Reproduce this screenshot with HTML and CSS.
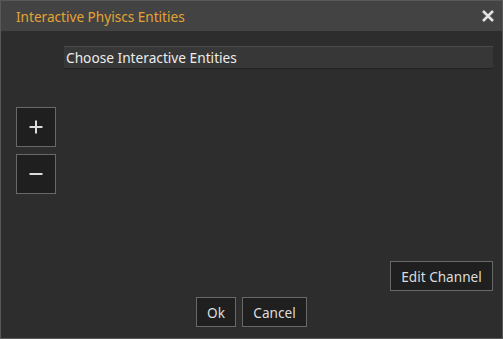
FILE: index.html
```html
<!DOCTYPE html>
<html lang="en">
<head>
    <meta charset="UTF-8">
    <title>Interactive Phyiscs Entities</title>
    <link rel="stylesheet" href="styles.css">
</head>
<body>
    <div class="window">
        <div class="titlebar">
            <span class="title">Interactive Phyiscs Entities</span>
            <button class="close" type="button">
                <svg width="14" height="14" viewBox="0 0 14 14">
                    <path d="M2 2 L12 12 M12 2 L2 12" stroke="#e2e2e2" stroke-width="2.6" fill="none"/>
                </svg>
            </button>
        </div>
        <div class="content">
            <div class="field-row">
                <div class="field">Choose Interactive Entities</div>
            </div>
            <div class="side-buttons">
                <button class="square" type="button">
                    <svg width="16" height="16" viewBox="0 0 16 16">
                        <path d="M8 1.5 V14.5 M1.5 8 H14.5" stroke="#dcdcdc" stroke-width="2" fill="none"/>
                    </svg>
                </button>
                <button class="square" type="button">
                    <svg width="16" height="16" viewBox="0 0 16 16">
                        <path d="M1.5 8 H14.5" stroke="#dcdcdc" stroke-width="2" fill="none"/>
                    </svg>
                </button>
            </div>
            <div class="edit-row">
                <button class="btn edit" type="button">Edit Channel</button>
            </div>
            <div class="footer">
                <button class="btn ok" type="button">Ok</button>
                <button class="btn cancel" type="button">Cancel</button>
            </div>
        </div>
    </div>
</body>
</html>
```

FILE: styles.css
```css
body {
    margin: 0;
    background-color: #2d2d2d;
    font-family: "Noto Sans", "Open Sans", sans-serif;
}
.window {
    width: 503px;
    height: 339px;
    box-sizing: border-box;
    border: 1px solid #585858;
    background-color: #2d2d2d;
    display: flex;
    flex-direction: column;
}
.titlebar {
    height: 30px;
    background-color: #434343;
    display: flex;
    align-items: center;
    justify-content: space-between;
    padding: 0 7px 0 15px;
}
.title {
    color: #e3a434;
    font-size: 13.6px;
}
.close {
    background: none;
    border: none;
    padding: 0;
    width: 14px;
    height: 14px;
    display: flex;
}
.content {
    flex: 1;
    display: flex;
    flex-direction: column;
    padding-bottom: 11px;
}
.field-row {
    padding: 15px 9px 0 63px;
}
.field {
    height: 23px;
    box-sizing: border-box;
    background-color: #373737;
    border-top: 1px solid #4a4a4a;
    border-bottom: 1px solid #222;
    color: #ececec;
    font-size: 13.7px;
    line-height: 21px;
    padding-left: 2px;
}
.side-buttons {
    display: flex;
    flex-direction: column;
    gap: 7px;
    margin: 38px 0 0 15px;
}
.square {
    width: 40px;
    height: 40px;
    background-color: #1f1f1f;
    border: 1px solid #686868;
    padding: 0;
    display: flex;
    align-items: center;
    justify-content: center;
}
.btn {
    height: 30px;
    background-color: #1f1f1f;
    border: 1px solid #686868;
    color: #dcdcdc;
    font-family: "Noto Sans", "Open Sans", sans-serif;
    font-size: 13.6px;
    padding: 0;
}
.edit-row {
    margin-top: auto;
    display: flex;
    justify-content: flex-end;
    padding-right: 9px;
}
.edit {
    width: 103px;
}
.footer {
    display: flex;
    justify-content: center;
    gap: 6px;
    margin-top: 6px;
}
.ok {
    width: 40px;
}
.cancel {
    width: 65px;
}
```
